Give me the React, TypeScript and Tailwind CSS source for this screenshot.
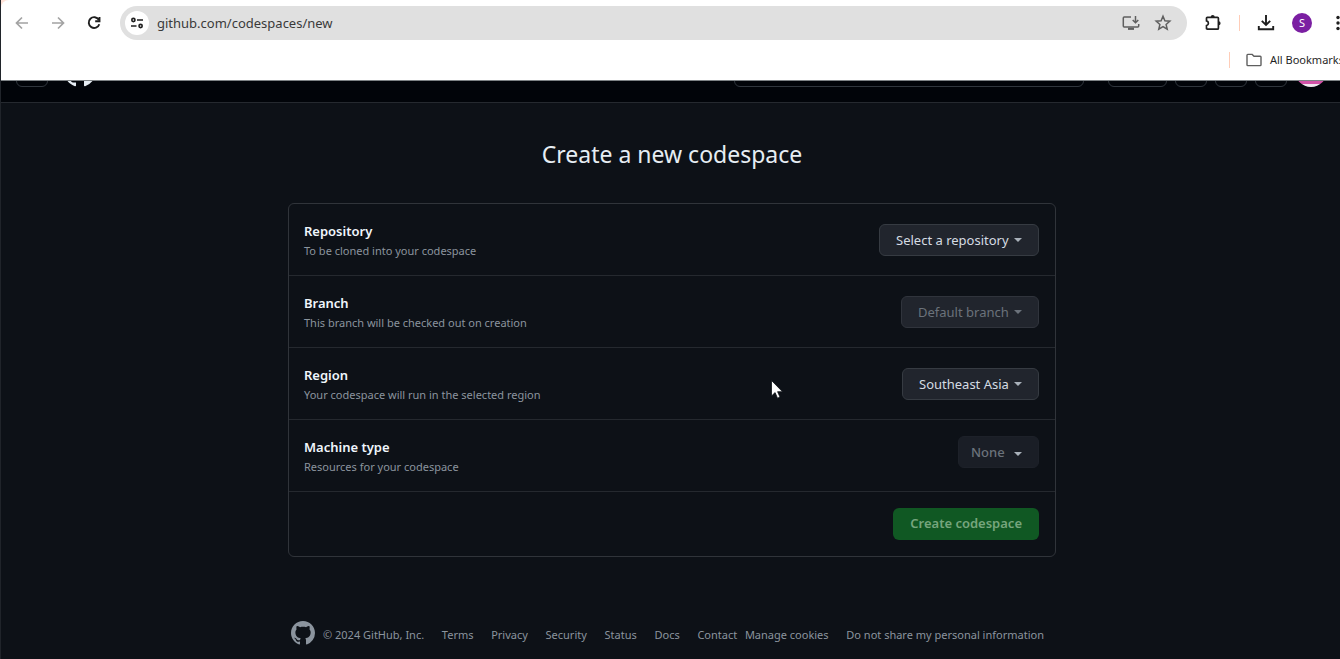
import { type ReactNode } from 'react';

const MARK =
  'M8 0C3.58 0 0 3.58 0 8c0 3.54 2.29 6.53 5.47 7.59.4.07.55-.17.55-.38 0-.19-.01-.82-.01-1.49-2.01.37-2.53-.49-2.69-.94-.09-.23-.48-.94-.82-1.13-.28-.15-.68-.52-.01-.53.63-.01 1.08.58 1.23.82.72 1.21 1.87.87 2.33.66.07-.52.28-.87.51-1.07-1.78-.2-3.64-.89-3.64-3.95 0-.87.31-1.59.82-2.15-.08-.2-.36-1.02.08-2.12 0 0 .67-.21 2.2.82.64-.18 1.32-.27 2-.27.68 0 1.36.09 2 .27 1.53-1.04 2.2-.82 2.2-.82.44 1.1.16 1.92.08 2.12.51.56.82 1.27.82 2.15 0 3.07-1.87 3.75-3.65 3.95.29.25.54.73.54 1.48 0 1.07-.01 1.93-.01 2.2 0 .21.15.46.55.38A8.01 8.01 0 0 0 16 8c0-4.42-3.58-8-8-8Z';

function GitHubMark({ className }: { className: string }) {
  return (
    <svg viewBox="0 0 16 16" fill="currentColor" className={className} aria-hidden="true">
      <path d={MARK} />
    </svg>
  );
}

function ToolbarIcon({ children, className = '' }: { children: ReactNode; className?: string }) {
  return (
    <svg
      viewBox="0 0 20 20"
      fill="none"
      stroke="currentColor"
      strokeWidth="1.7"
      className={`size-5 ${className}`}
      aria-hidden="true"
    >
      {children}
    </svg>
  );
}

function BrowserBar() {
  return (
    <header className="border-b border-[#7d8285] bg-[#ffe3d8] text-[#1f1f1f]">
      <div className="rounded-tl-lg bg-white pt-[3px]">
        <div className="-mr-[5px] flex h-10 items-center">
          <div className="flex items-center gap-4 pl-[11px]">
            <button type="button" aria-label="Back" className="text-[#a3a3a3]">
              <ToolbarIcon>
                <path d="M16 10H5M10 4.500 4.500 10l5.500 5.500" />
              </ToolbarIcon>
            </button>
            <button type="button" aria-label="Forward" className="text-[#a3a3a3]">
              <ToolbarIcon>
                <path d="M4 10h11M10 4.500 15.500 10 10 15.500" />
              </ToolbarIcon>
            </button>
            <button type="button" aria-label="Reload">
              <ToolbarIcon>
                <path d="M14.800 6.800A5.400 5.400 0 1 0 15.300 11.200M15.500 4v4.200h-4.300" strokeWidth="1.900" />
              </ToolbarIcon>
            </button>
          </div>
          <div className="ml-4 flex h-[34px] min-w-0 flex-1 items-center rounded-full bg-[#e0e0e0] pl-[5px] pr-[14px]">
            <button
              type="button"
              aria-label="Site information"
              className="flex size-6 shrink-0 items-center justify-center rounded-full bg-white"
            >
              <svg viewBox="0 0 14 14" className="size-[14px]" fill="none" stroke="currentColor" strokeWidth="1.600">
                <circle cx="3.400" cy="4" r="1.600" />
                <path d="M7 4h6M1 10h5.500" />
                <circle cx="10.600" cy="10" r="1.600" />
              </svg>
            </button>
            <input
              type="text"
              aria-label="Address"
              defaultValue="github.com/codespaces/new"
              className="ml-2 min-w-0 flex-1 bg-transparent pt-[2px] text-[13px] text-[#3a3a3a] outline-none"
            />
            <div className="flex gap-3 text-[#5f5f5f]">
              <button type="button" aria-label="Install">
                <ToolbarIcon>
                  <path
                    d="M10 4H3.200a.9.900 0 0 0-.9.900v8.200c0 .5.400.9.900.9h13.600c.5 0 .9-.4.900-.9V11M14.500 3v6.500M11.700 7l2.800 2.800L17.300 7"
                    strokeWidth="1.500"
                  />
                  <path d="M7 15.800h6" strokeWidth="2.200" />
                </ToolbarIcon>
              </button>
              <button type="button" aria-label="Bookmark">
                <ToolbarIcon>
                  <path
                    d="m10 3.200 1.900 4.600 4.900.4-3.700 3.200 1.100 4.800L10 13.600l-4.200 2.600 1.100-4.800-3.700-3.200 4.900-.4z"
                    strokeWidth="1.500"
                  />
                </ToolbarIcon>
              </button>
            </div>
          </div>
          <div className="ml-4 flex items-center">
            <button type="button" aria-label="Extensions">
              <ToolbarIcon>
                <path d="M4.300 4.300h10.100c.6 0 1 .4 1 1v9.900c0 .6-.4 1-1 1H4.300a.8.800 0 0 1-.8-.8v-2.800a2.400 2.400 0 0 0 0-4.700V5.100c0-.5.300-.8.800-.8z" />
                <path
                  d="M7.700 4.100a2 2 0 0 1 4 0zM15.600 8.200a2 2 0 0 1 0 4z"
                  fill="currentColor"
                  stroke="none"
                />
              </ToolbarIcon>
            </button>
            <span className="ml-4 h-4 w-px shrink-0 bg-[#ffcdb8]" />
            <button type="button" aria-label="Downloads" className="ml-4">
              <ToolbarIcon>
                <path d="M10 2v9.500M5.800 7.800 10 12l4.200-4.200M2.800 13v3.300h14.400V13" strokeWidth="1.900" />
              </ToolbarIcon>
            </button>
            <button
              type="button"
              className="ml-4 flex size-5 items-center justify-center rounded-full bg-[#7b1fa2] text-[11px] text-white"
            >
              S
            </button>
            <button type="button" aria-label="Menu" className="ml-4">
              <svg viewBox="0 0 20 20" className="size-5" fill="currentColor">
                <circle cx="10" cy="4.500" r="1.700" />
                <circle cx="10" cy="10" r="1.700" />
                <circle cx="10" cy="15.500" r="1.700" />
              </svg>
            </button>
          </div>
        </div>
        <div className="flex h-[37px] items-start justify-end pt-2">
          <span className="mt-px h-4 w-px shrink-0 bg-[#ffcdb8]" />
          <button type="button" className="-mr-px ml-4 flex items-center gap-2 whitespace-nowrap text-[11px]/[18px]">
            <svg viewBox="0 0 16 14" className="h-[14px] w-4" fill="none" stroke="#5f5f5f" strokeWidth="1.400">
              <path d="M1 2.200c0-.4.300-.8.800-.8h4.400L8 3.200h6.200c.4 0 .8.300.8.800v7.800c0 .4-.4.800-.8.800H1.800a.8.800 0 0 1-.8-.8z" />
            </svg>
            All Bookmarks
          </button>
        </div>
      </div>
    </header>
  );
}

const HEADER_BUTTON = 'h-8 shrink-0 rounded-md border border-[#30363d]';

function SiteHeader() {
  return (
    <nav className="flex h-[22px] items-end overflow-hidden border-b border-[#25292f] bg-[#010409] pb-[15px] pl-[15px] pr-4">
      <button type="button" aria-label="Open navigation" className={`w-8 ${HEADER_BUTTON}`} />
      <a href="#home" aria-label="Homepage" className="ml-4 shrink-0 text-[#e6edf3]">
        <GitHubMark className="size-8" />
      </a>
      <button type="button" aria-label="Search" className={`ml-auto w-[350px] ${HEADER_BUTTON}`} />
      <button type="button" aria-label="Create new" className={`ml-6 w-[59px] ${HEADER_BUTTON}`} />
      <div className="ml-2 flex shrink-0 items-end gap-2">
        <button type="button" aria-label="Issues" className={`w-8 ${HEADER_BUTTON}`} />
        <button type="button" aria-label="Pull requests" className={`w-8 ${HEADER_BUTTON}`} />
        <button type="button" aria-label="Notifications" className={`w-8 ${HEADER_BUTTON}`} />
        <button
          type="button"
          aria-label="Account"
          className="size-8 rounded-full bg-linear-to-b from-[#d252a8] from-90% to-[#f0e6ee] to-90%"
        />
      </div>
    </nav>
  );
}

type Field = {
  id: string;
  label: string;
  hint: string;
  value: string;
  disabled?: boolean;
  muted?: boolean;
};

const FIELDS: Field[] = [
  { id: 'repository', label: 'Repository', hint: 'To be cloned into your codespace', value: 'Select a repository' },
  { id: 'branch', label: 'Branch', hint: 'This branch will be checked out on creation', value: 'Default branch', disabled: true },
  { id: 'region', label: 'Region', hint: 'Your codespace will run in the selected region', value: 'Southeast Asia' },
  { id: 'machine', label: 'Machine type', hint: 'Resources for your codespace', value: 'None', disabled: true, muted: true },
];

function FieldRow({ field }: { field: Field }) {
  const tone = field.muted
    ? 'border-[#1d2129] bg-[#1a1e26] pl-3 pr-[33px] font-medium text-[#6b727b]'
    : field.disabled
      ? 'border-[#30343c] bg-[#21252d] pl-4 pr-[29px] text-[#6b727b]'
      : 'border-[#363b42] bg-[#21252d] pl-4 pr-[29px] text-[#d5dce3]';
  return (
    <div className="flex items-start justify-between border-b border-[#25292f] pb-[15px] pl-[15px] pr-4 pt-4">
      <div className="pt-px">
        <label htmlFor={field.id} className="block text-[13px]/[21px] font-semibold text-[#f0f6fc]">
          {field.label}
        </label>
        <p className="text-[11px]/[18px] text-[#8b949e]">{field.hint}</p>
      </div>
      <div className={field.muted ? 'relative' : 'relative mt-1'}>
        <select
          id={field.id}
          disabled={field.disabled}
          className={`block h-8 appearance-none rounded-md border pt-[2px] text-[13px] opacity-100 ${tone}`}
        >
          <option>{field.value}</option>
        </select>
        <svg
          viewBox="0 0 8 4"
          className={`pointer-events-none absolute right-[17px] h-1 w-2 ${field.muted ? 'top-4' : 'top-[14px]'} ${
            field.disabled && !field.muted ? 'text-[#6b727b]' : 'text-[#a9b1ba]'
          }`}
          fill="currentColor"
          aria-hidden="true"
        >
          <path d="M0 0h8L4 4z" />
        </svg>
      </div>
    </div>
  );
}

const LINKS = ['Terms', 'Privacy', 'Security', 'Status', 'Docs', 'Contact'];

function Footer() {
  return (
    <footer className="mx-auto mt-16 flex w-full max-w-[768px] items-center whitespace-nowrap pl-[3px] pr-3 text-[11px]/[18px] text-[#8b949e]">
      <GitHubMark className="size-6 shrink-0" />
      <div className="flex flex-1 justify-between pl-2 pt-[3px]">
        <span>© 2024 GitHub, Inc.</span>
        {LINKS.map((link) => (
          <a key={link} href={`#${link.toLowerCase()}`}>
            {link}
          </a>
        ))}
        <button type="button" className="-ml-[10px]">
          Manage cookies
        </button>
        <button type="button">Do not share my personal information</button>
      </div>
    </footer>
  );
}

export default function App() {
  return (
    <div className="relative min-h-screen overflow-hidden bg-[#0d1117] font-['Noto_Sans','Open_Sans',sans-serif]">
      <div className="min-h-screen w-[calc(100%+3px)] border-l border-[#20242a]">
        <BrowserBar />
        <SiteHeader />
        <main className="pt-[33px]">
          <h1 className="text-center text-[23px] leading-9 text-[#e6edf3]">Create a new codespace</h1>
          <form
            className="mx-auto mt-[31px] max-w-[768px] rounded-md border border-[#30343a]"
            onSubmit={(event) => event.preventDefault()}
          >
            {FIELDS.map((field) => (
              <FieldRow key={field.id} field={field} />
            ))}
            <div className="flex justify-end p-4">
              <button
                type="submit"
                disabled
                className="h-8 rounded-md bg-[#105823] px-[17px] text-[13px] font-semibold text-[#76a57d]"
              >
                Create codespace
              </button>
            </div>
          </form>
        </main>
        <Footer />
      </div>
      <svg
        viewBox="0 0 12 19"
        className="pointer-events-none absolute left-[771px] top-[380px] h-[19px] w-3"
        fill="#fff"
        stroke="#0d1117"
        strokeWidth="0.800"
        aria-hidden="true"
      >
        <path d="M.5.500v15.500l3.600-3.400 2.400 5.600 2.500-1.100-2.400-5.400h4.900z" />
      </svg>
    </div>
  );
}
